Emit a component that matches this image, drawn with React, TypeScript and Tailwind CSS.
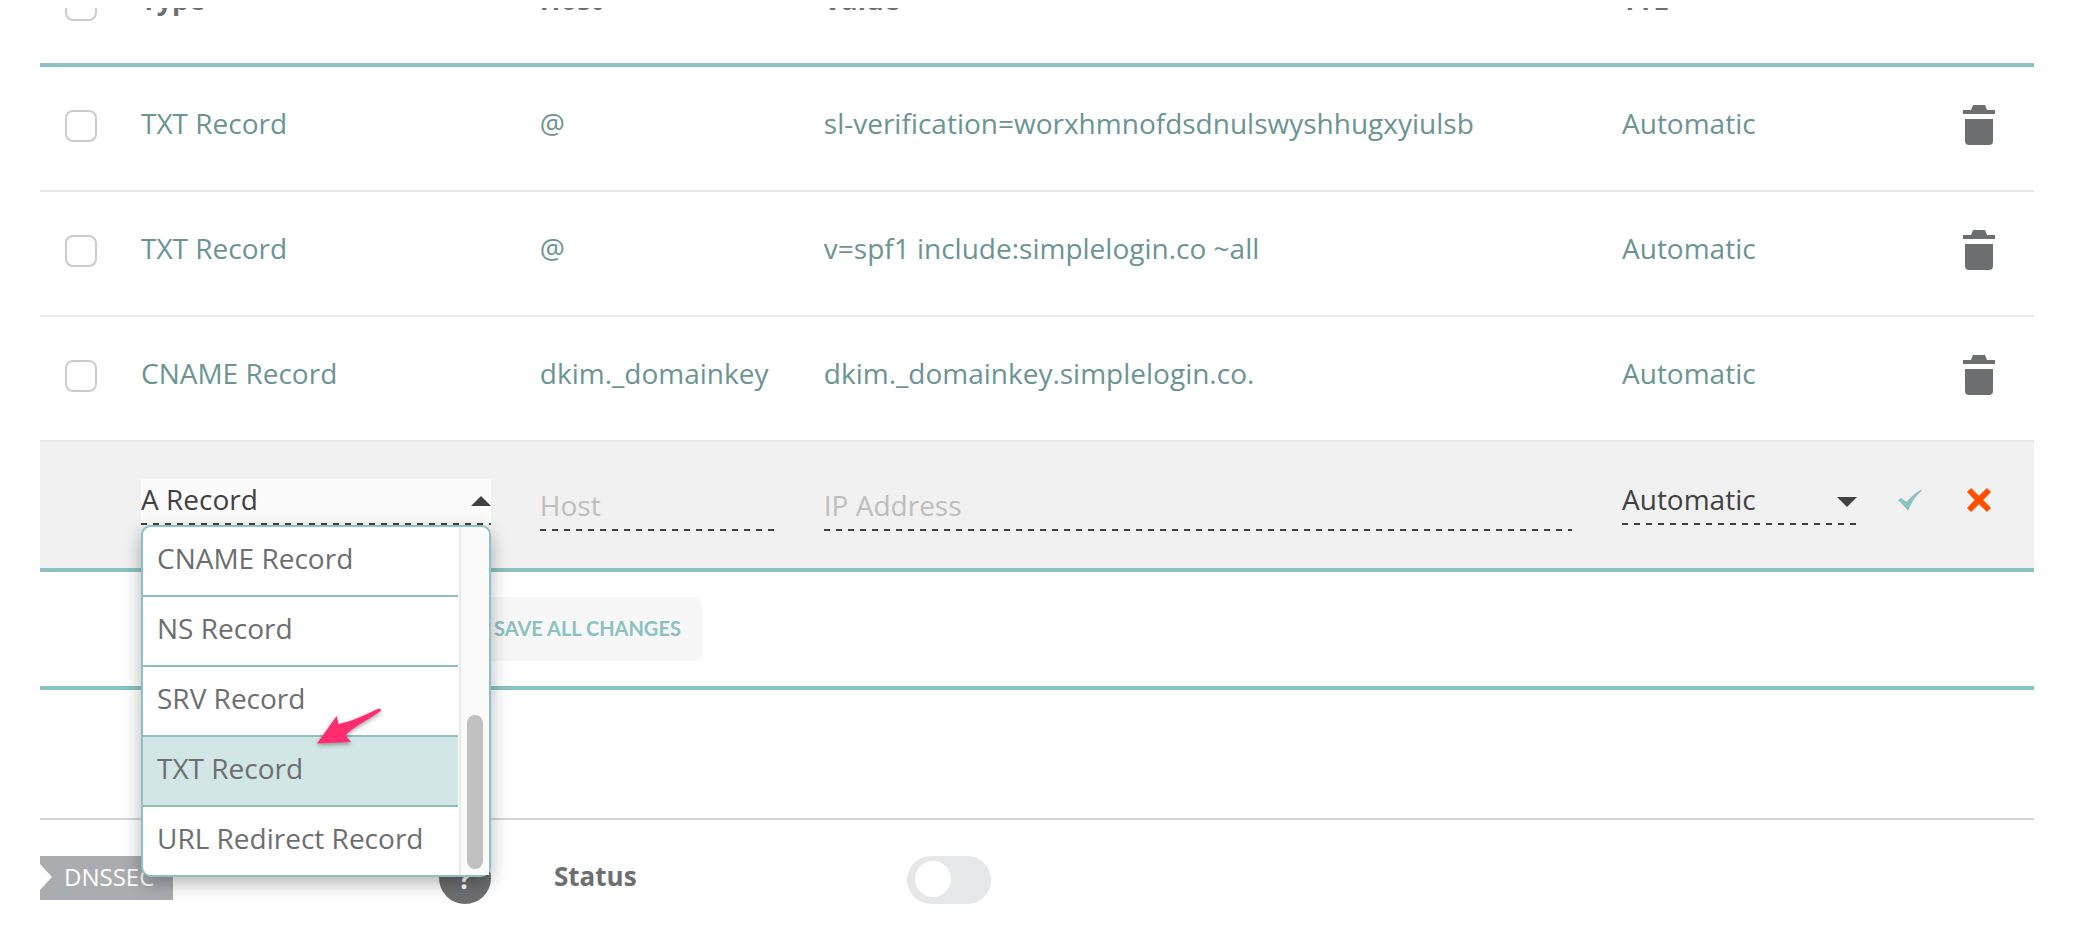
import type { ReactNode } from "react";

interface DnsRecord {
  id: string;
  type: string;
  host: string;
  value: string;
  ttl: string;
}

const records: DnsRecord[] = [
  { id: "r1", type: "TXT Record", host: "@", value: "sl-verification=worxhmnofdsdnulswyshhugxyiulsb", ttl: "Automatic" },
  { id: "r2", type: "TXT Record", host: "@", value: "v=spf1 include:simplelogin.co ~all", ttl: "Automatic" },
  { id: "r3", type: "CNAME Record", host: "dkim._domainkey", value: "dkim._domainkey.simplelogin.co.", ttl: "Automatic" },
];

const recordTypes = ["CNAME Record", "NS Record", "SRV Record", "TXT Record", "URL Redirect Record"];
const highlightedType = "TXT Record";

const dashedLine =
  "bg-[repeating-linear-gradient(to_right,#414141_0_6px,transparent_6px_12px)] bg-[length:100%_2px] bg-bottom bg-no-repeat";

function Checkbox({ label }: { label: string }) {
  return (
    <input
      type="checkbox"
      aria-label={label}
      className="block size-8 appearance-none rounded-lg border-2 border-[#cccccc] bg-white checked:bg-[#8bc1c0]"
    />
  );
}

function TrashIcon() {
  return (
    <svg viewBox="0 0 32 40" className="h-10 w-8 fill-[#6d6e70]" aria-hidden="true">
      <path d="M0 5h8l2-5h12l2 5h8v4H0z" />
      <path d="M2 14h28v22a4 4 0 0 1-4 4H6a4 4 0 0 1-4-4z" />
    </svg>
  );
}

function CheckIcon() {
  return (
    <svg viewBox="0 0 24 22" className="h-[22px] w-6 fill-[#8bc1c0]" aria-hidden="true">
      <path d="M0 11.2 2.9 8.9 8.6 13C12.5 7.8 17.5 3.6 24 .4V1.6C18.500 6.500 14 12.500 10.300 21.200H9.500C6.600 17.600 3.600 14.300 0 11.200z" />
    </svg>
  );
}

function CrossIcon() {
  return (
    <svg viewBox="0 0 24 24" className="size-6 fill-[#ff5100]" aria-hidden="true">
      <path d="M4 0 12 7.700 20 0 24 4 16.300 12 24 20 20 24 12 16.300 4 24 0 20 7.700 12 0 4z" />
    </svg>
  );
}

function Caret({ up = false }: { up?: boolean }) {
  return (
    <svg viewBox="0 0 20 10" className="h-2.5 w-5 fill-[#414141]" aria-hidden="true">
      <path d={up ? "M0 10 10 0 20 10z" : "M0 0h20L10 10z"} />
    </svg>
  );
}

function PointerArrow() {
  return (
    <svg
      viewBox="0 0 70 48"
      className="pointer-events-none absolute top-[178px] left-[169px] h-12 w-[70px] fill-[#ff2d70] drop-shadow-[0_2px_2px_rgba(0,0,0,0.35)]"
      aria-hidden="true"
    >
      <path d="M5 38.500 24.600 11 26.500 19C40 16.500 52 10 66.500 3.800Q70 3.500 68.500 6C58 14.500 43 20 33.500 30.500L39 37Z" />
    </svg>
  );
}

function TypePicker() {
  return (
    <div className="relative">
      <button
        type="button"
        role="combobox"
        aria-label="Record type"
        aria-haspopup="listbox"
        aria-expanded="true"
        aria-controls="record-types"
        className={`flex h-[46px] w-full items-center justify-between bg-[#fbfbfb] pb-1.5 text-left text-[#414141] ${dashedLine}`}
      >
        <span>A Record</span>
        <span className="pt-1">
          <Caret up />
        </span>
      </button>
      <div className="absolute top-full left-0 z-10 flex w-full rounded-[10px] border-2 border-[#8bc1c0] bg-white shadow-[0_6px_18px_rgba(0,0,0,0.3)]">
        <ul id="record-types" role="listbox" aria-label="Record type" className="min-w-0 flex-1">
          {recordTypes.map((name) => (
            <li
              key={name}
              role="option"
              aria-selected={name === highlightedType}
              className={`flex h-[70px] items-center border-b-2 border-[#8bc1c0] px-3.5 pb-1.5 text-[#6d6e70] last:h-[68px] last:border-b-0 ${
                name === highlightedType ? "bg-[#d1e6e5]" : ""
              }`}
            >
              {name}
            </li>
          ))}
        </ul>
        <div className="ml-px flex w-[30px] items-end justify-center rounded-tr-lg border-l-2 border-[#e8e8e8] bg-[#fafafa] pb-1.5">
          <div className="h-[154px] w-4 rounded-full bg-[#c1c1c1]" />
        </div>
        <PointerArrow />
      </div>
    </div>
  );
}

function HeaderCell({ children }: { children?: ReactNode }) {
  return (
    <th className="h-[121px] border-b-4 border-[#8bc1c0] pt-[34px] text-left align-top text-[27px] font-bold text-[#6d6e70]">
      {children}
    </th>
  );
}

export default function App() {
  return (
    <main className="min-h-screen bg-white pt-2 pr-11 pl-10 font-['Open_Sans','Noto_Sans',sans-serif] text-[28px] leading-10">
      <div className="overflow-hidden">
        <table className="-mt-[62px] w-full table-fixed border-separate border-spacing-0">
          <colgroup>
            <col className="w-[101px]" />
            <col className="w-[20%]" />
            <col className="w-[284px]" />
            <col />
            <col className="w-[262px]" />
            <col className="w-[150px]" />
          </colgroup>
          <thead>
            <tr>
              <th className="border-b-4 border-[#8bc1c0] pt-[43px] pl-[25px] align-top">
                <Checkbox label="Select all records" />
              </th>
              <HeaderCell>Type</HeaderCell>
              <HeaderCell>Host</HeaderCell>
              <HeaderCell>Value</HeaderCell>
              <HeaderCell>TTL</HeaderCell>
              <HeaderCell />
            </tr>
          </thead>
          <tbody className="text-[#6b9493]">
            {records.map((r) => (
              <tr key={r.id} className="h-[125px] align-top *:border-b-2 *:border-[#e8e8e8] *:pt-9">
                <td className="pl-[25px]">
                  <div className="pt-[7px]">
                    <Checkbox label={`Select ${r.type}`} />
                  </div>
                </td>
                <td>{r.type}</td>
                <td>{r.host}</td>
                <td>{r.value}</td>
                <td>{r.ttl}</td>
                <td className="pr-[39px]">
                  <button type="button" aria-label="Delete record" className="mt-0.5 ml-auto block">
                    <TrashIcon />
                  </button>
                </td>
              </tr>
            ))}
            <tr className="h-[130px] bg-[#f1f1f1] align-top *:border-b-4 *:border-[#8bc1c0]">
              <td />
              <td className="pt-[37px] pr-[49px]">
                <TypePicker />
              </td>
              <td className="pt-[43px] pr-[49px]">
                <input
                  type="text"
                  aria-label="Host"
                  placeholder="Host"
                  className={`block h-[46px] w-full pb-1.5 text-[#414141] outline-none placeholder:text-[#bebebe] ${dashedLine}`}
                />
              </td>
              <td className="pt-[43px] pr-[50px]">
                <input
                  type="text"
                  aria-label="IP Address"
                  placeholder="IP Address"
                  className={`block h-[46px] w-full pb-1.5 text-[#414141] outline-none placeholder:text-[#bebebe] ${dashedLine}`}
                />
              </td>
              <td className="pt-[37px] pr-[27px]">
                <div className="relative">
                  <select
                    aria-label="TTL"
                    defaultValue="Automatic"
                    className={`block h-[46px] w-full appearance-none pb-1.5 text-[#414141] ${dashedLine}`}
                  >
                    <option>Automatic</option>
                  </select>
                  <span className="pointer-events-none absolute top-[18px] right-0">
                    <Caret />
                  </span>
                </div>
              </td>
              <td className="pt-[38px] pr-[39px] pl-2.5">
                <div className="flex justify-between">
                  <button type="button" aria-label="Save record" className="flex h-10 w-8 items-center justify-center">
                    <CheckIcon />
                  </button>
                  <button type="button" aria-label="Cancel" className="flex h-10 w-8 items-center justify-center">
                    <CrossIcon />
                  </button>
                </div>
              </td>
            </tr>
          </tbody>
        </table>

        <div className="flex border-b-4 border-[#8bc1c0] py-[25px] pl-[433px]">
          <button
            type="button"
            className="h-16 rounded-lg bg-[#f7f7f7] px-[21px] pb-0.5 font-['Lato','Open_Sans',sans-serif] text-xl font-bold text-[#8bc1c0]"
          >
            SAVE ALL CHANGES
          </button>
        </div>

        <div className="h-[130px] border-b-2 border-[#d6d6d6]" />

        <section className="flex h-[112px] items-start pt-8">
          <div className="mt-1 flex h-11 w-[133px] items-center bg-[#abacb0] pb-0.5 text-2xl text-white">
            <svg viewBox="0 0 12 26" className="h-[26px] w-3 fill-white" aria-hidden="true">
              <path d="M0 0 12 13 0 26z" />
            </svg>
            <span className="pl-3">DNSSEC</span>
          </div>
          <button
            type="button"
            aria-label="DNSSEC help"
            className="ml-[266px] size-[52px] rounded-full bg-[#6d6e70] font-bold text-white"
          >
            ?
          </button>
          <label htmlFor="dnssec" className="mt-1 ml-[63px] w-[353px] text-[26px] font-bold text-[#6d6e70]">
            Status
          </label>
          <input
            id="dnssec"
            type="checkbox"
            role="switch"
            className="mt-1 flex h-12 w-[84px] appearance-none rounded-full bg-[#e6e7e8] pt-[5px] pl-2 before:block before:size-9 before:rounded-full before:bg-white checked:pl-10"
          />
        </section>
      </div>
    </main>
  );
}
